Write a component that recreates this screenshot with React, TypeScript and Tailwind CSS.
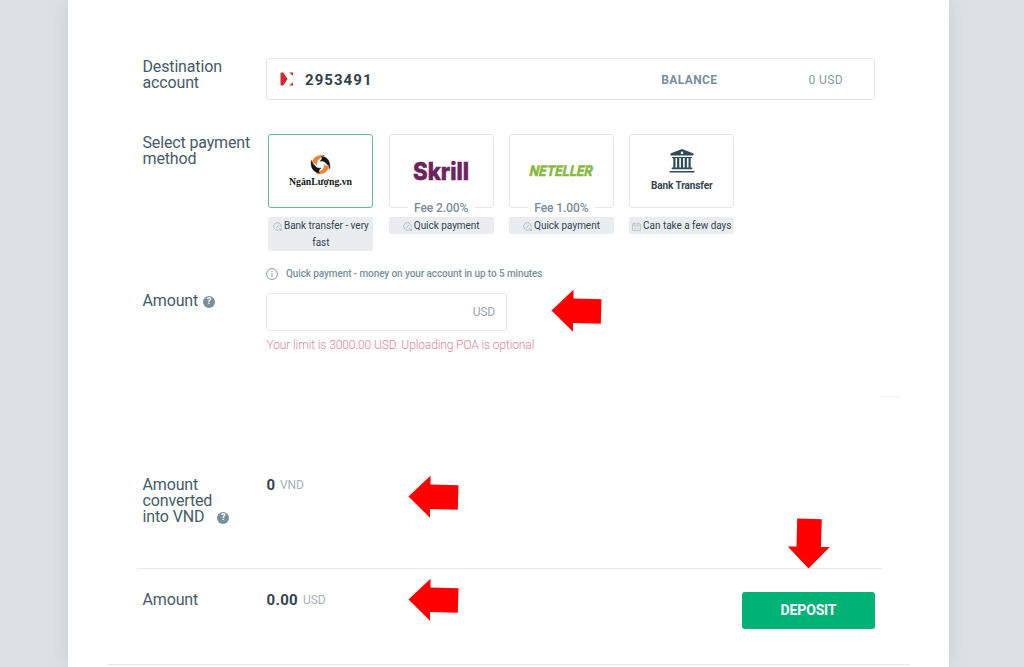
import React from "react";

function Arrow({ className }: { className: string }) {
  return (
    <svg viewBox="0 0 52 44" className={"absolute h-[44px] w-[52px] " + className} aria-hidden="true">
      <path d="M0.5 21.5 22.5.8V9.5L50.5 10.2 49.8 34.8 22 34V42.8Z" fill="#fe0000" />
    </svg>
  );
}

function Help({ className }: { className: string }) {
  return (
    <span className={"inline-flex h-[12px] w-[12px] items-center justify-center rounded-full bg-[#76909c] align-[2px] text-[9px] font-bold leading-none tracking-normal text-white " + className}>?</span>
  );
}

function ClockIcon() {
  return (
    <svg viewBox="0 0 10 10" className="mr-[2px] inline-block h-[9px] w-[9px] align-[-2px]" fill="none" stroke="#a9b5bb" strokeWidth="0.9">
      <path d="M6.5 8.9A4.2 4.2 0 1 1 9 6.2M3.6 6.4 5 5.4 6.6 3M6.6 6.8 9.3 9.3M9.3 7.2V9.3H7.2" />
    </svg>
  );
}

function CalendarIcon() {
  return (
    <svg viewBox="0 0 10 10" className="mr-[2px] inline-block h-[9px] w-[9px] align-[-2px]" fill="none" stroke="#b4bfc4" strokeWidth="0.9">
      <path d="M.6 2H9.4V9.4H.6ZM.6 4.2H9.4M2.8.6V3M7.2.6V3M2.5 6.8H4M6 6.8H7.5" />
    </svg>
  );
}

const BLADE = "M-8.2-1C-8.2-6.6-3-10.4 4.2-9.2 1.8-8.4.2-7.2-1-5.6-3-4.8-4-2.6-3.6.4-4.8-1.6-6.6-2-8.2-1Z";

function NganLuongLogo() {
  return (
    <svg viewBox="0 0 72 40" className="h-[40px] w-[72px]">
      <g transform="translate(35.5 13.6)" strokeWidth="0.5">
        <path d={BLADE} fill="#ee8037" stroke="#ee8037" />
        <path d={BLADE} fill="#151515" stroke="#151515" transform="rotate(90)" />
        <path d={BLADE} fill="#ee8037" stroke="#ee8037" transform="rotate(180)" />
        <path d={BLADE} fill="#151515" stroke="#151515" transform="rotate(270)" />
      </g>
      <text x="4" y="33.9" textLength="63" lengthAdjust="spacingAndGlyphs" fill="#151515" className="font-['Liberation_Serif',serif] text-[9.6px] font-bold">NgânLượng.vn</text>
    </svg>
  );
}

function SkrillLogo() {
  return (
    <svg viewBox="0 0 60 36" className="h-[36px] w-[60px] overflow-visible">
      <text x="2" y="27.4" textLength="56" lengthAdjust="spacingAndGlyphs" fill="#6b2460" stroke="#6b2460" strokeWidth="0.5" className="font-['Inter',sans-serif] text-[24px] font-extrabold">Skrill</text>
    </svg>
  );
}

function NetellerLogo() {
  return (
    <svg viewBox="0 0 72 24" className="h-[24px] w-[72px] overflow-visible">
      <g transform="translate(3.5 0) skewX(-12)">
        <text x="4" y="17.4" textLength="63" lengthAdjust="spacingAndGlyphs" fill="#85b93c" stroke="#85b93c" strokeWidth="0.6" className="font-['Inter',sans-serif] text-[14.5px] font-bold">NETELLER</text>
      </g>
    </svg>
  );
}

function BankIcon() {
  return (
    <svg viewBox="0 0 26 24" className="h-[24px] w-[26px]" fill="#2f4a5b">
      <path fillRule="evenodd" d="M13 0 24.5 4.6V6.6H1.5V4.6ZM13 2.6A1.3 1.3 0 1 0 13 5.2 1.3 1.3 0 1 0 13 2.6Z" />
      <path d="M3 8H23V9H3ZM4.3 9H6.5V18.5H4.3ZM8.1 9H10.3V18.5H8.1ZM11.9 9H14.1V18.5H11.9ZM15.7 9H17.9V18.5H15.7ZM19.5 9H21.7V18.5H19.5ZM2.7 18.5H23.3V20.2H2.7ZM.5 22H25.5V23.5H.5Z" />
    </svg>
  );
}

interface MethodProps {
  logo: React.ReactNode;
  note: string;
  icon: React.ReactNode;
  fee?: string;
  selected?: boolean;
}

function Method({ logo, note, icon, fee, selected }: MethodProps) {
  return (
    <div className="w-[105px]">
      <div className={"relative flex h-[74px] flex-col items-center justify-center rounded-[3px] border " + (selected ? "border-[#62bd8b]" : "border-[#e3e7e9]")}>
        {logo}
        {fee && (
          <span className="absolute -bottom-[8px] whitespace-nowrap bg-white px-[6px] text-[12px] font-medium leading-[14px] tracking-[-0.08px] text-[#7a8e9c]">{fee}</span>
        )}
      </div>
      <div className="mt-[9px] rounded-[2px] bg-[#e9edef] px-[2px] text-center text-[10px] leading-[17px] tracking-[-0.03px] text-[#34444f]">
        {icon}
        {note}
      </div>
    </div>
  );
}

export default function App() {
  return (
    <div className="flex h-[667px] w-[1024px] justify-start overflow-hidden bg-[#dce1e5] pl-[68px] font-['Roboto',sans-serif] text-[#455a68]">
      <main className="relative flex h-[667px] w-[881px] flex-col bg-white pt-[58px] shadow-[0_0_18px_rgba(120,145,160,0.22)]">
        <section className="flex h-[76px] pl-[74.5px]">
          <div className="w-[123.5px] pt-px text-[16px] leading-[16px] tracking-[-0.15px]">Destination<br />account</div>
          <div className="flex h-[42px] w-[609px] items-center rounded-[3px] border border-[#e2e6e8] pl-[13px] pr-[31px]">
            <svg viewBox="0 0 14 14" className="h-[14px] w-[14px]" fill="#d02730">
              <path d="M.5 1.5Q.5.5 1.5.5H3.2L7.6 7 3.2 13.5H1.5Q.5 13.5.5 12.5ZM9.2 .5H13V3.6Q12 3.4 11.5 2.6ZM9.2 13.5H13V10.4Q12 10.6 11.5 11.4Z" />
            </svg>
            <span className="ml-[11px] pt-[2px] text-[15px] font-bold tracking-[1.05px] text-[#33424d]">2953491</span>
            <span className="ml-auto pt-px text-[12px] font-bold tracking-[0.4px] text-[#78909c]">BALANCE</span>
            <span className="w-[125.5px] pt-px text-right text-[12px] tracking-[0.4px] text-[#8799a3]">0 USD</span>
          </div>
        </section>

        <section className="flex h-[134px] pl-[74.5px]">
          <div className="w-[125.9px] whitespace-nowrap pt-px text-[16px] leading-[16px] tracking-[-0.15px]">Select payment<br />method</div>
          <div className="flex gap-[15.3px]">
            <Method selected logo={<NganLuongLogo />} icon={<ClockIcon />} note="Bank transfer - very fast" />
            <Method logo={<SkrillLogo />} icon={<ClockIcon />} note="Quick payment" fee="Fee 2.00%" />
            <Method logo={<NetellerLogo />} icon={<ClockIcon />} note="Quick payment" fee="Fee 1.00%" />
            <Method
              logo={<><BankIcon /><span className="mt-[6px] text-[10px] font-bold leading-[14px] tracking-[-0.1px] text-[#34444f]">Bank Transfer</span></>}
              icon={<CalendarIcon />}
              note="Can take a few days"
            />
          </div>
        </section>

        <div className="flex h-[25px] items-start pl-[198px]">
          <svg viewBox="0 0 12 12" className="h-[12px] w-[12px]" fill="none" stroke="#8799a3">
            <circle cx="6" cy="6" r="5.4" />
            <path d="M6 5.2V9M6 3V4.2" />
          </svg>
          <span className="ml-[8px] text-[10px] font-medium leading-[12px] tracking-[-0.1px] text-[#78909c]">Quick payment - money on your account in up to 5 minutes</span>
        </div>

        <section className="flex h-[183px] pl-[74.5px]">
          <div className="w-[123.5px] text-[16px] leading-[16px] tracking-[-0.15px]">Amount<Help className="ml-[5px]" /></div>
          <div className="w-[300px]">
            <div className="flex h-[38px] w-[241px] items-center justify-end rounded-[3px] border border-[#e2e6e8] pr-[11px] text-[12px] tracking-[-0.15px] text-[#9aa7af]">USD</div>
            <p className="mt-[7px] whitespace-nowrap pl-[0.5px] text-[12px] font-light leading-[14px] tracking-[-0.12px] text-[#dc8499]">Your limit is 3000.00 USD. Uploading POA is optional</p>
          </div>
        </section>

        <section className="flex h-[92px] pl-[74.5px]">
          <div className="w-[123.5px] pt-px text-[16px] leading-[16px] tracking-[-0.15px]">Amount<br />converted<br />into VND<Help className="ml-[13px]" /></div>
          <div className="flex h-[18px] items-center pl-[0.5px]">
            <span className="text-[15px] font-bold text-[#34444f]">0</span>
            <span className="ml-[5px] text-[12px] tracking-[-0.15px] text-[#a5b0b6]">VND</span>
          </div>
        </section>

        <hr className="ml-[69px] w-[745px] border-[#e6e8ea]" />

        <section className="flex h-[95px] pl-[74.5px] pt-[23px]">
          <div className="w-[123.5px] text-[16px] leading-[16px] tracking-[-0.15px]">Amount</div>
          <div className="flex h-[16px] items-center pl-[0.5px]">
            <span className="text-[15px] font-bold tracking-[0.35px] text-[#34444f]">0.00</span>
            <span className="ml-[5px] text-[12px] tracking-[-0.15px] text-[#a5b0b6]">USD</span>
          </div>
          <button className="ml-auto mr-[74px] h-[37px] w-[133px] rounded-[3px] bg-[#01b277] text-[14px] font-bold tracking-[-0.15px] text-white">DEPOSIT</button>
        </section>

        <hr className="ml-[39px] w-[803px] border-[#e6e8ea]" />

        <Arrow className="left-[483px] top-[289px]" />
        <Arrow className="left-[340px] top-[475px]" />
        <Arrow className="left-[340px] top-[578px]" />
        <Arrow className="left-[715px] top-[521px] -rotate-90" />
        <span className="absolute left-[812px] top-[396px] h-px w-[20px] bg-[#eff1f2]" />
      </main>
    </div>
  );
}
